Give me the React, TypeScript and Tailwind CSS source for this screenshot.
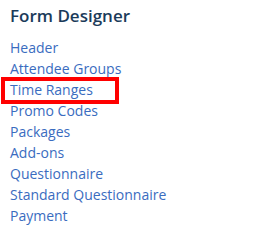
import React from "react";

const items = [
  "Header",
  "Attendee Groups",
  "Time Ranges",
  "Promo Codes",
  "Packages",
  "Add-ons",
  "Questionnaire",
  "Standard Questionnaire",
  "Payment",
];

const App: React.FC = () => {
  return (
    <div className="w-[258px] h-[252px] bg-white pl-[10px] pt-[2px] font-['Open_Sans',sans-serif]">
      <h2 className="text-[17px] leading-[27px] font-semibold text-[#1b3b5a]">Form Designer</h2>
      <ul className="mt-[8px]">
        {items.map((item) => (
          <li key={item} className="relative text-[14px] leading-[21px] text-[#3a6cc0]">
            {item}
            {/* highlight box */}
            {item === "Time Ranges" && (
              <span className="absolute left-[-9px] top-[-2px] w-[118px] h-[27px] border-4 border-[#ff0000]" />
            )}
          </li>
        ))}
      </ul>
    </div>
  );
};

export default App;
